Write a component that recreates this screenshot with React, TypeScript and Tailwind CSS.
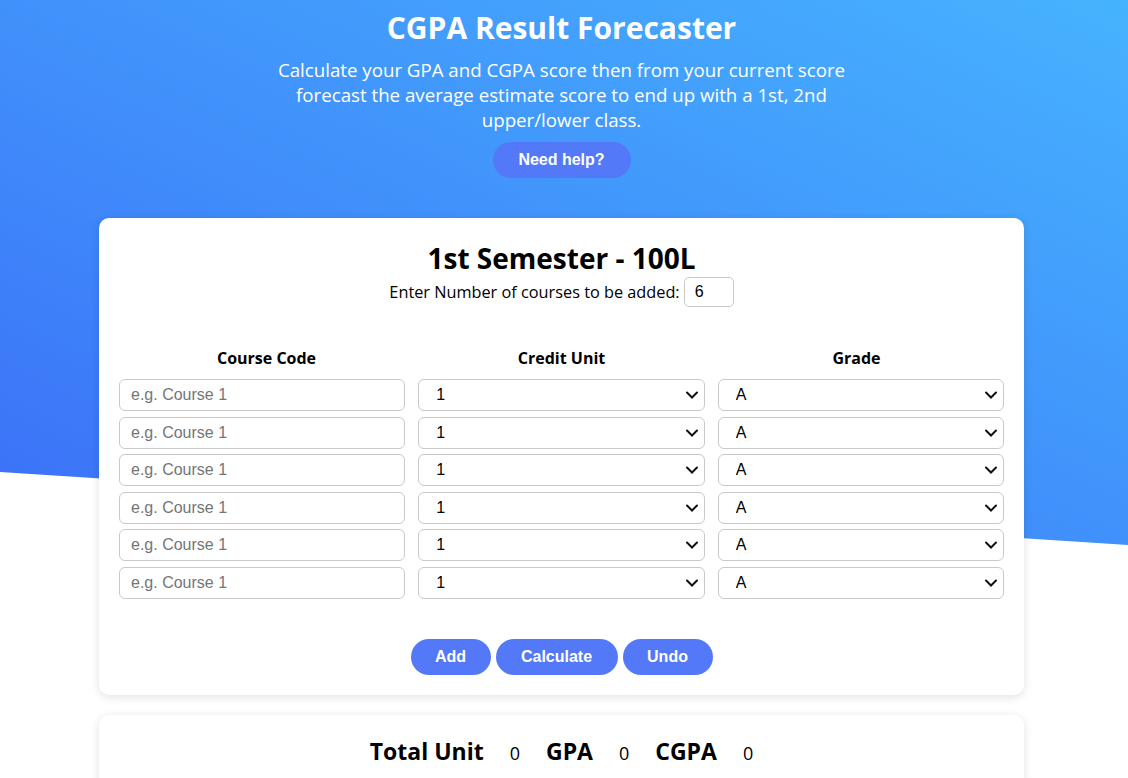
import React from "react";

const Chevron = () => (
  <svg
    className="pointer-events-none absolute right-[7px] top-1/2 -translate-y-1/2"
    width="12"
    height="8"
    viewBox="0 0 12 8"
    fill="none"
  >
    <path d="M1 1.5 L6 6.5 L11 1.5" stroke="#111" strokeWidth="2" strokeLinecap="round" />
  </svg>
);

function Select({ value, options }: { value: string; options: string[] }) {
  return (
    <div className="relative h-[32px]">
      <select
        defaultValue={value}
        className="h-full w-full appearance-none rounded-[6px] border border-[#c9c9c9] bg-white pl-[17px] text-[16px] text-black outline-none"
        style={{ fontFamily: "'Liberation Sans', Arial, sans-serif" }}
      >
        {options.map((o) => (
          <option key={o}>{o}</option>
        ))}
      </select>
      <Chevron />
    </div>
  );
}

export default function App() {
  const rows = [0, 1, 2, 3, 4, 5];
  return (
    <div className="relative min-h-[778px] w-full bg-white" style={{ fontFamily: "'Open Sans', sans-serif" }}>
      <div className="absolute left-0 top-0 z-0 h-[545px] w-full bg-[linear-gradient(to_top_right,#3b6ff8,#46b3fe)] [clip-path:polygon(0_0,100%_0,100%_100%,0_86.6%)]" />
      <div className="relative z-10 flex flex-col items-center pr-[5px] pt-[6px]">
        <h1 className="text-[30px] font-bold leading-[43px] text-white">CGPA Result Forecaster</h1>
        <p className="mt-[8px] w-[580px] text-center text-[18.7px] leading-[25px] text-white">
          Calculate your GPA and CGPA score then from your current score forecast the average estimate score to end up with a 1st, 2nd upper/lower class.
        </p>
        <button
          className="mt-[10px] h-[36px] w-[138px] rounded-full bg-[#5479f8] text-[16px] font-bold text-white"
          style={{ fontFamily: "'Liberation Sans', Arial, sans-serif" }}
        >
          Need help?
        </button>

        <div className="mt-[40px] w-[925px] rounded-[10px] bg-white px-[20px] pb-[20px] pt-[21px] shadow-[0_2px_10px_rgba(0,0,0,0.12)]">
          <h2 className="text-center text-[28px] font-bold leading-[38px] text-black">1st Semester - 100L</h2>
          <div className="flex items-center justify-center gap-[4px] text-[16.3px] text-black">
            <span>Enter Number of courses to be added:</span>
            <input
              defaultValue="6"
              className="h-[30px] w-[50px] rounded-[5px] border border-[#c9c9c9] px-[10px] text-[16px] text-black outline-none"
              style={{ fontFamily: "'Liberation Sans', Arial, sans-serif" }}
            />
          </div>

          <div className="mt-[40px] grid grid-cols-3 text-[16px] font-bold leading-[22px] text-black">
            <div className="text-center">Course Code</div>
            <div className="text-center">Credit Unit</div>
            <div className="text-center">Grade</div>
          </div>

          <div className="mt-[10px] flex flex-col gap-[5.5px]">
            {rows.map((r) => (
              <div key={r} className="grid grid-cols-3 gap-x-[13px]">
                <input
                  placeholder="e.g. Course 1"
                  className="h-[32px] rounded-[6px] border border-[#c9c9c9] bg-white px-[11px] text-[16px] text-black outline-none placeholder:text-[#757575]"
                  style={{ fontFamily: "'Liberation Sans', Arial, sans-serif" }}
                />
                <Select value="1" options={["1", "2", "3", "4", "5", "6"]} />
                <Select value="A" options={["A", "B", "C", "D", "E", "F"]} />
              </div>
            ))}
          </div>

          <div
            className="mt-[40px] flex justify-center gap-[5px] text-[16px] font-bold text-white"
            style={{ fontFamily: "'Liberation Sans', Arial, sans-serif" }}
          >
            <button className="h-[36px] w-[80px] rounded-full bg-[#5479f8]">Add</button>
            <button className="h-[36px] w-[122px] rounded-full bg-[#5479f8]">Calculate</button>
            <button className="h-[36px] w-[90px] rounded-full bg-[#5479f8]">Undo</button>
          </div>
        </div>

        <div className="mt-[20px] mb-[20px] w-[925px] rounded-[10px] bg-white px-[20px] pb-[20px] pt-[20px] shadow-[0_2px_10px_rgba(0,0,0,0.12)]">
          <div className="flex items-baseline justify-center gap-[26px] text-black">
            <span className="text-[23px] font-bold leading-[33px]">Total Unit</span>
            <span className="text-[18px]">0</span>
            <span className="text-[23px] font-bold leading-[33px]">GPA</span>
            <span className="text-[18px]">0</span>
            <span className="text-[23px] font-bold leading-[33px]">CGPA</span>
            <span className="text-[18px]">0</span>
          </div>
        </div>
      </div>
    </div>
  );
}
